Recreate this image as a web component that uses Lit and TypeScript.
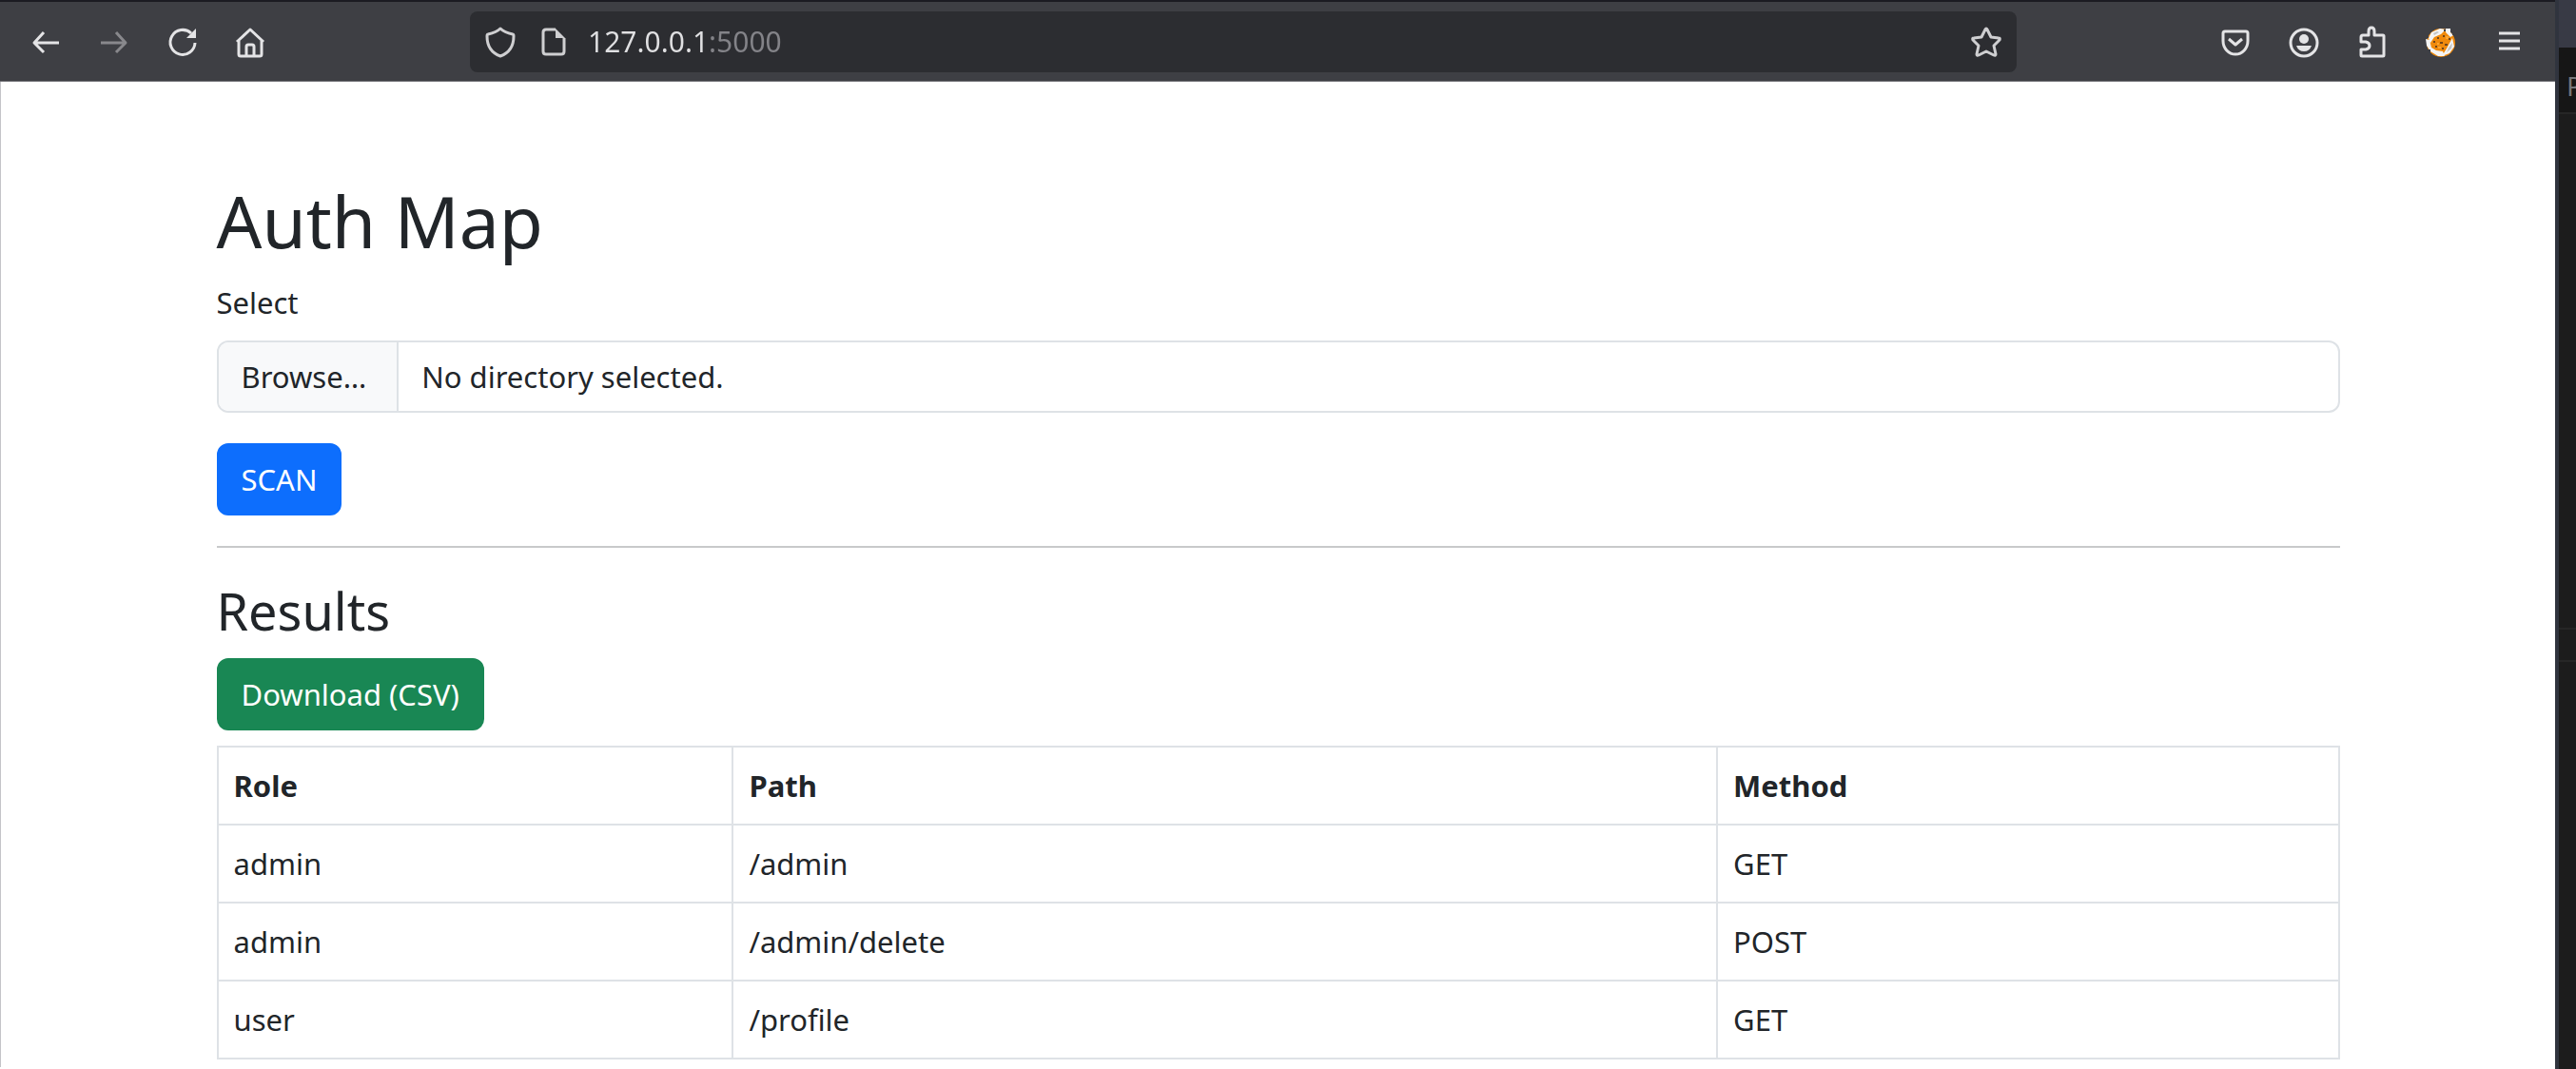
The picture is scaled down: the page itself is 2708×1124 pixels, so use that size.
import { LitElement, html, css, svg } from "lit";
import { customElement, property, state } from "lit/decorators.js";

const icons = {
  back: svg`<path d="M30 17H4M14 6 4 17l10 10"/>`,
  forward: svg`<path d="M2 17h26M18 6l10 11-10 10"/>`,
  reload: svg`<path d="M29 17A13 13 0 1 1 25 7"/><path class="solid" d="M30 2v10H20z"/>`,
  home: svg`<path d="M1 16 15 3l14 13M3 15v14q0 2 2 2h20q2 0 2-2V15M11 31V21q0-2 2-2h4q2 0 2 2v10"/>`,
  shield: svg`<path d="M16 2Q20 6 29 8q1 0 1 2Q30 26 16 31 2 26 2 10q0-2 1-2Q12 6 16 2z"/>`,
  page: svg`<path d="M18 3H8Q5 3 5 6v20q0 3 3 3h16q3 0 3-3V12"/><path class="solid" d="M18 2v10h10z"/>`,
  star: svg`<path d="M15 3q1-2 2 0l4 8 8 1q2 0 1 2l-6 6 2 9q0 2-2 1l-8-4-8 4q-2 1-2-1l2-9-6-6q-1-2 1-2l8-1z"/>`,
  pocket: svg`<path d="M5 5h22q2 0 2 2v8a13 14 0 0 1-26 0V7q0-2 2-2zM9 13l7 6 7-6"/>`,
  account: svg`<circle cx="16" cy="17" r="14"/><circle class="solid" cx="16" cy="13" r="5"/><path class="solid" d="M8 20h16q-2 6-8 6t-8-6z"/>`,
  puzzle: svg`<path d="M4 11q0-2 2-2h6V5q0-4 3-4t3 4v4h9q1 0 1 1v20q0 1-1 1H5q-1 0-1-1v-6h5q4-1 4-4t-4-4H4z"/>`,
  menu: svg`<path d="M5 7h22M5 15h22M5 23h22"/>`,
  fox: svg`
    <circle fill="#f08a0c" cx="16" cy="17" r="15"/>
    <path fill="#f4f4f4" d="M3 12 6 6l9-4 6 1-5 5-7 3-4 6zM21 2h5v4l3 3-3 2-5-5zM0 13l4 1 2 8 5 3 7 1 2 5h-7l-8-5-4-6zM28 12l2 9-5 7-8 3 5-8z"/>
    <path fill="#3e3f44" d="M0 9h3v3H0zM28 5h3v4h-3zM2 24h3v3H2zM19 3h2v2h-2z"/>
    <path fill="#c4c4c4" d="m24 22 4-5-1 6-5 4zM8 7l4-2 2 1-5 3z"/>
    <path fill="#70451a" d="M12 11h2v2h-2zM18 9h2v2h-2zM8 15h2v2H8zM15 16h3v2h-3zM20 18h3v2h-3zM10 20h2v2h-2zM17 22h2v2h-2zM24 12h2v2h-2z"/>
    <path fill="#f9a634" d="M21 10h3v3h-3zM12 17h2v2h-2zM13 21h3v2h-3z"/>`,
};

type IconName = keyof typeof icons;

@customElement("tool-icon")
export class ToolIcon extends LitElement {
  @property() name: IconName = "menu";

  static styles = css`
    :host {
      display: block;
      flex: none;
    }
    .icon {
      display: block;
      width: 32px;
      height: 32px;
      overflow: visible;
      fill: none;
      stroke: currentColor;
      stroke-width: 3;
      stroke-linejoin: round;
    }
    .icon.filled {
      stroke: none;
    }
    .solid {
      fill: currentColor;
      stroke: none;
    }
  `;

  render() {
    return html`<svg class=${this.name === "fox" ? "icon filled" : "icon"} viewBox="0 0 32 32" aria-hidden="true">
      ${icons[this.name]}
    </svg>`;
  }
}

@customElement("browser-toolbar")
export class BrowserToolbar extends LitElement {
  static styles = css`
    :host {
      display: flex;
      align-items: center;
      box-sizing: border-box;
      height: 86px;
      padding: 0 32px;
      background: #3e3f44;
      border-top: 2px solid #1b1b22;
      border-bottom: 1px solid #77777c;
      color: #e4e4e6;
    }
    .group {
      display: flex;
      gap: 40px;
    }
    .tool {
      display: block;
      padding: 0;
      border: 0;
      background: none;
      color: inherit;
    }
    .tool:disabled {
      color: #88888c;
    }
    .address {
      display: flex;
      flex: 1;
      align-items: center;
      gap: 16px;
      height: 64px;
      box-sizing: border-box;
      margin: 0 214px;
      padding: 0 16px;
      border-radius: 8px;
      background: #2c2d31;
      color: #cfcfd1;
    }
    .badges {
      display: flex;
      gap: 24px;
    }
    .url {
      flex: 1;
      min-width: 0;
      height: 48px;
      padding: 0 4px;
      border: 0;
      outline: 0;
      font: 30px / 48px "Noto Sans", sans-serif;
      color: transparent;
      background: linear-gradient(90deg, #e0e0e2 131px, #838388 131px);
      -webkit-background-clip: text;
      background-clip: text;
    }
  `;

  private tool(name: IconName, label: string, disabled = false) {
    return html`<button class="tool" type="button" aria-label=${label} ?disabled=${disabled}>
      <tool-icon name=${name}></tool-icon>
    </button>`;
  }

  render() {
    return html`
      <div class="group">
        ${this.tool("back", "Back")} ${this.tool("forward", "Forward", true)} ${this.tool("reload", "Reload")}
        ${this.tool("home", "Home")}
      </div>
      <div class="address">
        <div class="badges">${this.tool("shield", "Tracking protection")} ${this.tool("page", "Site information")}</div>
        <input class="url" type="text" aria-label="Address" spellcheck="false" value="127.0.0.1:5000" />
        ${this.tool("star", "Bookmark")}
      </div>
      <div class="group">
        ${this.tool("pocket", "Pocket")} ${this.tool("account", "Account")} ${this.tool("puzzle", "Extensions")}
        ${this.tool("fox", "Proxy")} ${this.tool("menu", "Menu")}
      </div>
    `;
  }
}

interface ResultRow {
  role: string;
  path: string;
  method: string;
}

@customElement("auth-map")
export class AuthMap extends LitElement {
  @state() private rows: ResultRow[] = [
    { role: "admin", path: "/admin", method: "GET" },
    { role: "admin", path: "/admin/delete", method: "POST" },
    { role: "user", path: "/profile", method: "GET" },
  ];

  static styles = css`
    :host {
      display: block;
      box-sizing: border-box;
      width: 100%;
      max-width: 2280px;
      margin: 0 auto;
      padding: 96px 24px 8px;
    }
    h1,
    h2 {
      font-weight: 400;
    }
    h1 {
      margin: 0 0 12px;
      font-size: 75px;
      line-height: 100px;
    }
    h2 {
      margin: 0 0 16px;
      font-size: 54px;
      line-height: 68px;
    }
    .label {
      display: block;
      width: fit-content;
      margin-bottom: 16px;
    }
    .file {
      position: relative;
      display: flex;
      margin-bottom: 32px;
      border: 2px solid #dee2e6;
      border-radius: 12px;
      overflow: hidden;
    }
    .file-input {
      position: absolute;
      inset: 0;
      width: 100%;
      opacity: 0;
    }
    .browse {
      padding: 12px 32px 12px 24px;
      border-right: 2px solid #dee2e6;
      background: #f8f9fa;
    }
    .chosen {
      padding: 12px 24px;
    }
    .btn {
      display: block;
      width: fit-content;
      padding: 12px 24px;
      border: 2px solid;
      border-radius: 12px;
      font: inherit;
      color: #fff;
      text-decoration: none;
    }
    .primary {
      border-color: #0d6efd;
      background: #0d6efd;
    }
    .success {
      border-color: #198754;
      background: #198754;
    }
    hr {
      margin: 32px 0;
      border: 0;
      border-top: 2px solid #c8c9ca;
    }
    table {
      width: 100%;
      margin-top: 16px;
      border-collapse: collapse;
      table-layout: fixed;
    }
    .role {
      width: 24.3%;
    }
    .path {
      width: 46.4%;
    }
    th,
    td {
      padding: 16px;
      border: 2px solid #dee2e6;
      text-align: left;
    }
  `;

  render() {
    return html`
      <h1>Auth Map</h1>
      <form @submit=${(e: Event) => e.preventDefault()}>
        <label class="label" for="directory">Select</label>
        <div class="file">
          <span class="browse">Browse…</span>
          <span class="chosen">No directory selected.</span>
          <input class="file-input" id="directory" type="file" webkitdirectory />
        </div>
        <button class="btn primary" type="submit">SCAN</button>
      </form>
      <hr />
      <h2>Results</h2>
      <a class="btn success" href="#download">Download (CSV)</a>
      <table>
        <colgroup>
          <col class="role" />
          <col class="path" />
          <col />
        </colgroup>
        <thead>
          <tr>
            <th scope="col">Role</th>
            <th scope="col">Path</th>
            <th scope="col">Method</th>
          </tr>
        </thead>
        <tbody>
          ${this.rows.map(
            (row) => html`<tr>
              <td>${row.role}</td>
              <td>${row.path}</td>
              <td>${row.method}</td>
            </tr>`,
          )}
        </tbody>
      </table>
    `;
  }
}

@customElement("app-root")
export class AppRoot extends LitElement {
  static styles = css`
    :host {
      display: grid;
      grid-template-columns: minmax(0, 1fr) 22px;
      min-height: 100vh;
      font-family: "Noto Sans", sans-serif;
      font-size: 31px;
      line-height: 48px;
      color: #212529;
      background: #fff;
    }
    .page {
      border-left: 1px solid #c4c4c8;
    }
    .neighbour {
      overflow: hidden;
      border-left: 4px solid #30343e;
      background: #1c1c1c;
    }
    .titlebar {
      height: 50px;
      background: #383a45;
    }
    .tab {
      height: 68px;
      padding-left: 8px;
      border-bottom: 2px solid #262626;
      background: #161616;
      font-size: 28px;
      line-height: 80px;
      color: #77777a;
    }
    .row {
      height: 32px;
      margin-top: 540px;
      border: solid #262626;
      border-width: 2px 0;
    }
  `;

  render() {
    return html`
      <div class="window">
        <browser-toolbar></browser-toolbar>
        <main class="page"><auth-map></auth-map></main>
      </div>
      <aside class="neighbour">
        <div class="titlebar"></div>
        <div class="tab">P</div>
        <div class="row"></div>
      </aside>
    `;
  }
}
